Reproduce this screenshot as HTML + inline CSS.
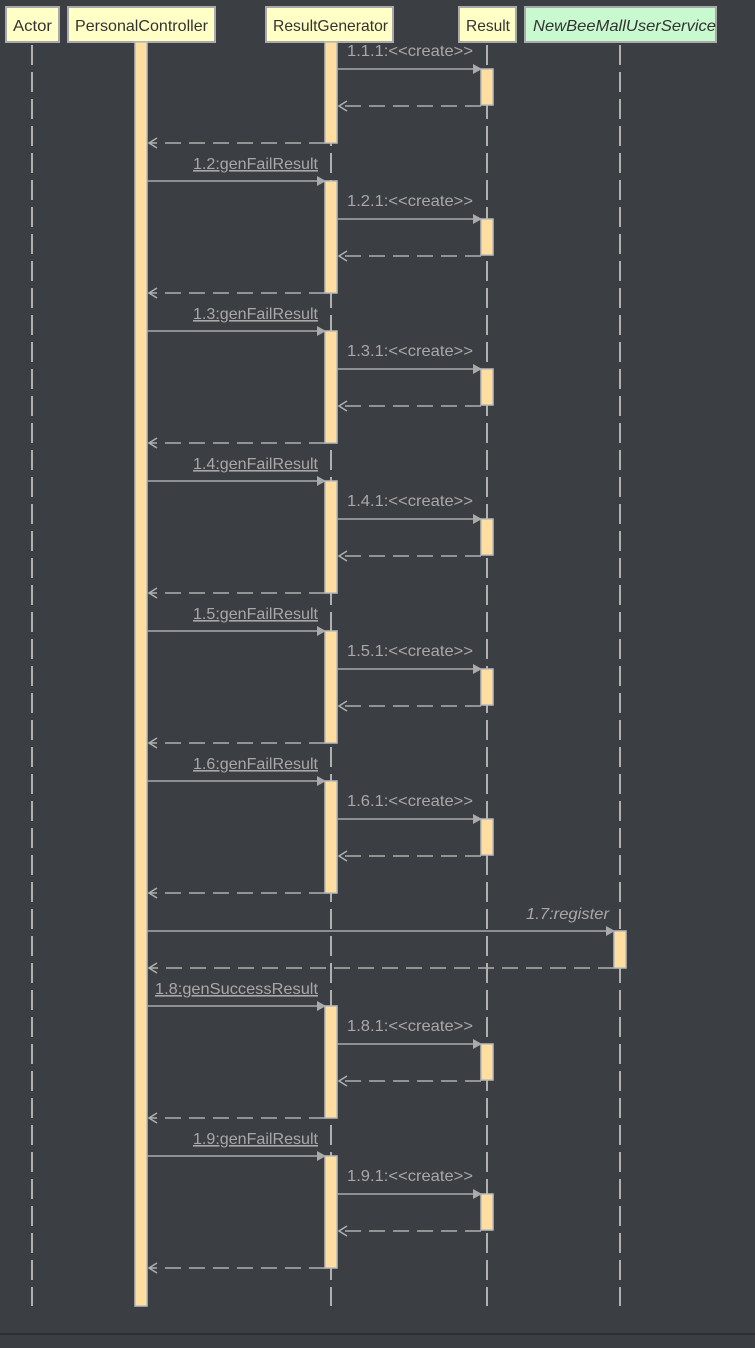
<!DOCTYPE html>
<html><head><meta charset="utf-8"><style>
html,body{margin:0;padding:0;background:#3b3e42;}
svg{display:block}
text{font-family:"Liberation Sans",sans-serif;}
.lbl{font-size:16px;fill:#a8a8a8;}
.hd{font-size:16px;fill:#333;}
</style></head><body>
<svg width="755" height="1348" viewBox="0 0 755 1348" xmlns="http://www.w3.org/2000/svg">
<rect width="755" height="1348" fill="#3b3e42"/>
<g stroke="#b0b0b0" stroke-width="2" stroke-dasharray="20 7">
<line x1="32" y1="45" x2="32" y2="1306"/>
<line x1="141" y1="45" x2="141" y2="1306"/>
<line x1="331" y1="45" x2="331" y2="1306"/>
<line x1="487" y1="45" x2="487" y2="1306"/>
<line x1="620" y1="45" x2="620" y2="1306"/>
</g>
<rect x="0" y="1333" width="755" height="2" fill="#2e2f31"/>
<g stroke="#aaa" stroke-width="2" fill="#ffffc6">
<rect x="6" y="7" width="53" height="35"/>
<rect x="68" y="7" width="147" height="35"/>
<rect x="266" y="7" width="127" height="35"/>
<rect x="459" y="7" width="57" height="35"/>
<rect x="525" y="7" width="191" height="35" fill="#c9f9cf"/>
</g>
<text class="hd" x="13" y="31" textLength="39" lengthAdjust="spacingAndGlyphs">Actor</text>
<text class="hd" x="75" y="31" textLength="133" lengthAdjust="spacingAndGlyphs">PersonalController</text>
<text class="hd" x="273" y="31" textLength="115" lengthAdjust="spacingAndGlyphs">ResultGenerator</text>
<text class="hd" x="466" y="31" textLength="44" lengthAdjust="spacingAndGlyphs">Result</text>
<text class="hd" x="533" y="31" font-style="italic" textLength="183" lengthAdjust="spacingAndGlyphs">NewBeeMallUserService</text>
<g fill="#ffdea0" stroke="#bbb" stroke-width="1.5">
<rect x="135" y="42" width="12" height="1264"/>
<rect x="325" y="42" width="12" height="101"/>
<rect x="614" y="931" width="12" height="37"/>
</g>
<defs>
<g id="blk">
<line x1="147" y1="0" x2="319" y2="0" stroke="#aaa" stroke-width="1.5"/>
<polygon points="317,-5 326,0 317,5" fill="#aaa"/>
<rect x="325" y="0" width="12" height="112" fill="#ffdea0" stroke="#bbb" stroke-width="1.5"/>
</g>
<g id="crt">
<line x1="337" y1="38" x2="475" y2="38" stroke="#aaa" stroke-width="1.5"/>
<polygon points="473,33 482,38 473,43" fill="#aaa"/>
<rect x="481" y="38" width="12" height="36" fill="#ffdea0" stroke="#bbb" stroke-width="1.5"/>
<line x1="481" y1="75" x2="339" y2="75" stroke="#b0b0b0" stroke-width="1.5" stroke-dasharray="16 8"/>
<polyline points="347,70 339,75 347,80" fill="none" stroke="#b0b0b0" stroke-width="1.5"/>
<line x1="325" y1="112" x2="149" y2="112" stroke="#b0b0b0" stroke-width="1.5" stroke-dasharray="16 8"/>
<polyline points="157,107 149,112 157,117" fill="none" stroke="#b0b0b0" stroke-width="1.5"/>
</g>
</defs>
<g transform="translate(0,31)"><use href="#crt"/><text class="lbl" x="347" y="25" textLength="126" lengthAdjust="spacingAndGlyphs">1.1.1:&lt;&lt;create&gt;&gt;</text></g>
<g transform="translate(0,181)"><use href="#blk"/><use href="#crt"/><text class="lbl" x="193" y="-12" textLength="125" lengthAdjust="spacingAndGlyphs" text-decoration="underline">1.2:genFailResult</text><text class="lbl" x="347" y="25" textLength="126" lengthAdjust="spacingAndGlyphs">1.2.1:&lt;&lt;create&gt;&gt;</text></g>
<g transform="translate(0,331)"><use href="#blk"/><use href="#crt"/><text class="lbl" x="193" y="-12" textLength="125" lengthAdjust="spacingAndGlyphs" text-decoration="underline">1.3:genFailResult</text><text class="lbl" x="347" y="25" textLength="126" lengthAdjust="spacingAndGlyphs">1.3.1:&lt;&lt;create&gt;&gt;</text></g>
<g transform="translate(0,481)"><use href="#blk"/><use href="#crt"/><text class="lbl" x="193" y="-12" textLength="125" lengthAdjust="spacingAndGlyphs" text-decoration="underline">1.4:genFailResult</text><text class="lbl" x="347" y="25" textLength="126" lengthAdjust="spacingAndGlyphs">1.4.1:&lt;&lt;create&gt;&gt;</text></g>
<g transform="translate(0,631)"><use href="#blk"/><use href="#crt"/><text class="lbl" x="193" y="-12" textLength="125" lengthAdjust="spacingAndGlyphs" text-decoration="underline">1.5:genFailResult</text><text class="lbl" x="347" y="25" textLength="126" lengthAdjust="spacingAndGlyphs">1.5.1:&lt;&lt;create&gt;&gt;</text></g>
<g transform="translate(0,781)"><use href="#blk"/><use href="#crt"/><text class="lbl" x="193" y="-12" textLength="125" lengthAdjust="spacingAndGlyphs" text-decoration="underline">1.6:genFailResult</text><text class="lbl" x="347" y="25" textLength="126" lengthAdjust="spacingAndGlyphs">1.6.1:&lt;&lt;create&gt;&gt;</text></g>
<g transform="translate(0,1006)"><use href="#blk"/><use href="#crt"/><text class="lbl" x="155" y="-12" textLength="163" lengthAdjust="spacingAndGlyphs" text-decoration="underline">1.8:genSuccessResult</text><text class="lbl" x="347" y="25" textLength="126" lengthAdjust="spacingAndGlyphs">1.8.1:&lt;&lt;create&gt;&gt;</text></g>
<g transform="translate(0,1156)"><use href="#blk"/><use href="#crt"/><text class="lbl" x="193" y="-12" textLength="125" lengthAdjust="spacingAndGlyphs" text-decoration="underline">1.9:genFailResult</text><text class="lbl" x="347" y="25" textLength="126" lengthAdjust="spacingAndGlyphs">1.9.1:&lt;&lt;create&gt;&gt;</text></g>
<text class="lbl" x="526" y="919" font-style="italic" textLength="83" lengthAdjust="spacingAndGlyphs">1.7:register</text>
<line x1="147" y1="931" x2="608" y2="931" stroke="#aaa" stroke-width="1.5"/>
<polygon points="606,926 615,931 606,936" fill="#aaa"/>
<line x1="614" y1="968" x2="149" y2="968" stroke="#b0b0b0" stroke-width="1.5" stroke-dasharray="16 8"/>
<polyline points="157,963 149,968 157,973" fill="none" stroke="#b0b0b0" stroke-width="1.5"/>
</svg>
</body></html>
